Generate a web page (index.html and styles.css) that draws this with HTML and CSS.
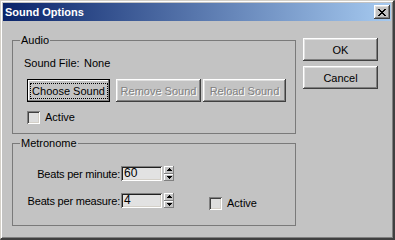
FILE: index.html
```html
<!DOCTYPE html>
<html lang="en">

<head>
    <meta charset="UTF-8">
    <meta name="viewport" content="width=device-width, initial-scale=1.0">
    <title>Sound Options</title>
    <link rel="stylesheet" href="styles.css">
</head>

<body>
    <div class="window">
        <div class="titlebar">
            <span class="title">Sound Options</span>
            <button class="close-btn">
                <svg width="8" height="7" viewBox="0 0 8 7">
                    <path d="M0 0h2v1h-2z M6 0h2v1h-2z M1 1h2v1h-2z M5 1h2v1h-2z M2 2h4v1h-4z M3 3h2v1h-2z M2 4h4v1h-4z M1 5h2v1h-2z M5 5h2v1h-2z M0 6h2v1h-2z M6 6h2v1h-2z" fill="#000"/>
                </svg>
            </button>
        </div>

        <div class="content">
            <div class="groups">
                <!-- Audio -->
                <div class="group audio">
                    <span class="group-label">Audio</span>
                    <div class="sound-file">
                        <span class="file-label">Sound File:</span><span>None</span>
                    </div>
                    <div class="btn-row">
                        <button class="btn default choose">Choose Sound</button>
                        <button class="btn disabled remove">Remove Sound</button>
                        <button class="btn disabled reload">Reload Sound</button>
                    </div>
                    <label class="check audio-check"><span class="box"></span>Active</label>
                </div>

                <!-- Metronome -->
                <div class="group metronome">
                    <span class="group-label">Metronome</span>
                    <div class="spin-rows">
                        <div class="spin-row">
                            <span class="spin-label">Beats per minute:</span>
                            <span class="field">60</span>
                            <span class="spinner">
                                <span class="spin-half"><svg width="5" height="3" viewBox="0 0 5 3"><path d="M2 0h1v1h1v1h1v1h-5v-1h1v-1h1z" fill="#000"/></svg></span>
                                <span class="spin-half"><svg width="5" height="3" viewBox="0 0 5 3"><path d="M0 0h5v1h-1v1h-1v1h-1v-1h-1v-1h-1z" fill="#000"/></svg></span>
                            </span>
                        </div>
                        <div class="spin-row">
                            <span class="spin-label">Beats per measure:</span>
                            <span class="field">4</span>
                            <span class="spinner">
                                <span class="spin-half"><svg width="5" height="3" viewBox="0 0 5 3"><path d="M2 0h1v1h1v1h1v1h-5v-1h1v-1h1z" fill="#000"/></svg></span>
                                <span class="spin-half"><svg width="5" height="3" viewBox="0 0 5 3"><path d="M0 0h5v1h-1v1h-1v1h-1v-1h-1v-1h-1z" fill="#000"/></svg></span>
                            </span>
                        </div>
                    </div>
                    <label class="check metro-check"><span class="box"></span>Active</label>
                </div>
            </div>

            <div class="side-buttons">
                <button class="btn side">OK</button>
                <button class="btn side">Cancel</button>
            </div>
        </div>
    </div>
</body>

</html>
```

FILE: styles.css
```css
body {
    margin: 0;
    padding: 0;
    background-color: #c3c3c3;
    font-family: "Liberation Sans", Arial, sans-serif;
    font-size: 11px;
    color: #000;
}

.window {
    width: 395px;
    height: 240px;
    box-sizing: border-box;
    background-color: #c3c3c3;
    border-top: 1px solid #d4d0c8;
    border-left: 1px solid #d4d0c8;
    border-right: 2px solid #404040;
    border-bottom: 2px solid #404040;
    box-shadow: inset 1px 1px #fff, inset -1px -1px #808080;
    padding: 2px 2px 0 2px;
}

.titlebar {
    height: 18px;
    display: flex;
    align-items: center;
    justify-content: space-between;
    padding: 0 1px 0 2px;
    background: linear-gradient(to right, #0a246a, #a6caf0);
}

.title {
    color: #fff;
    font-weight: bold;
    line-height: 18px;
}

.close-btn {
    width: 16px;
    height: 14px;
    padding: 0;
    border: none;
    background-color: #c3c3c3;
    display: flex;
    align-items: center;
    justify-content: center;
    box-shadow: inset -1px -1px #404040, inset 1px 1px #fff, inset -2px -2px #808080, inset 2px 2px #dfdfdf;
}

.content {
    display: flex;
    padding-left: 9px;
}

.groups {
    margin-top: 19px;
}

.group {
    position: relative;
    box-sizing: border-box;
    width: 284px;
    border: 1px solid #7a7a7a;
}

.group-label {
    position: absolute;
    top: -7px;
    left: 7px;
    padding: 0 1px;
    line-height: 13px;
    background-color: #c3c3c3;
}

.audio {
    height: 94px;
    padding: 16px 0 0 11px;
}

.sound-file {
    line-height: 13px;
}

.file-label {
    display: inline-block;
    width: 60px;
}

.btn-row {
    display: flex;
    margin: 9px 0 0 3px;
}

.btn {
    height: 23px;
    padding: 0;
    border: none;
    font: inherit;
    color: #000;
    white-space: nowrap;
    background-color: #c3c3c3;
    box-shadow: inset -1px -1px #404040, inset 1px 1px #fff, inset -2px -2px #808080, inset 2px 2px #dfdfdf;
}

.btn.default {
    position: relative;
    box-shadow: inset 0 0 0 1px #000, inset -2px -2px #808080, inset 2px 2px #fff;
}

.btn.default::after {
    content: "";
    position: absolute;
    top: 4px;
    left: 3px;
    right: 2px;
    bottom: 3px;
    border: 1px dotted #000;
}

.btn.disabled {
    color: #808080;
    text-shadow: 1px 1px 0 #fff;
}

.choose {
    width: 83px;
}

.remove {
    width: 85px;
    margin-left: 6px;
}

.reload {
    width: 83px;
    margin-left: 2px;
}

.check {
    display: flex;
    align-items: center;
    line-height: 13px;
}

.check .box {
    width: 13px;
    height: 13px;
    margin-right: 5px;
    background-color: #dedede;
    box-shadow: inset 1px 1px #808080, inset -1px -1px #fff, inset 2px 2px #404040, inset -2px -2px #d4d0c8;
}

.audio-check {
    margin: 9px 0 0 3px;
}

.metronome {
    height: 83px;
    margin-top: 9px;
    padding: 22px 0 0 15px;
    display: flex;
}

.spin-row {
    display: flex;
    align-items: center;
    height: 15px;
}

.spin-row + .spin-row {
    margin-top: 12px;
}

.spin-label {
    flex-shrink: 0;
    width: 92px;
    margin-right: 1px;
    display: flex;
    justify-content: flex-end;
    white-space: nowrap;
    letter-spacing: -0.2px;
}

.field {
    flex-shrink: 0;
    width: 41px;
    height: 15px;
    box-sizing: border-box;
    padding: 1px 0 0 3px;
    font-size: 12px;
    line-height: 13px;
    background-color: #e2e2e2;
    box-shadow: inset 1px 1px #808080, inset -1px -1px #fff, inset 2px 2px #202020, inset -2px -2px #d4d0c8;
}

.spinner {
    flex-shrink: 0;
    display: flex;
    flex-direction: column;
    width: 10px;
    height: 15px;
    margin-left: 2px;
}

.spin-half {
    flex: 1;
    display: flex;
    align-items: center;
    justify-content: center;
    box-shadow: inset -1px -1px #808080, inset 1px 1px #fff;
}

.metro-check {
    align-self: flex-start;
    margin: 31px 0 0 35px;
}

.side-buttons {
    display: flex;
    flex-direction: column;
    gap: 5px;
    margin: 17px 0 0 7px;
}

.side {
    width: 75px;
}
```
